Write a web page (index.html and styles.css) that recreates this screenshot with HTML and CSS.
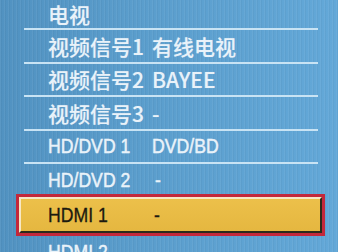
FILE: index.html
```html
<!DOCTYPE html>
<html lang="zh">
<head>
<meta charset="utf-8">
<link rel="stylesheet" href="styles.css">
</head>
<body>
<div class="screen">
  <ul class="menu">
    <li class="row cjk first"><span class="label">电视</span><span class="value"></span></li>
    <li class="row cjk"><span class="label">视频信号1</span><span class="value">有线电视</span></li>
    <li class="row cjk"><span class="label">视频信号2</span><span class="value">BAYEE</span></li>
    <li class="row cjk"><span class="label">视频信号3</span><span class="value">-</span></li>
    <li class="row latin"><span class="label"><span class="nar">HD/DVD 1</span></span><span class="value"><span class="nar">DVD/BD</span></span></li>
    <li class="row latin plain"><span class="label"><span class="nar">HD/DVD 2</span></span><span class="value"><span class="nar dash">-</span></span></li>
    <li class="row latin selected"><div class="bevel"><span class="label"><span class="nar">HDMI 1</span></span><span class="value"><span class="nar dash">-</span></span></div></li>
    <li class="row latin"><span class="label"><span class="nar">HDMI 2</span></span><span class="value"><span class="nar dash">-</span></span></li>
  </ul>
</div>
</body>
</html>
```
FILE: styles.css
```css
html, body {
  margin: 0;
  padding: 0;
}
body {
  width: 338px;
  height: 252px;
  overflow: hidden;
  background: linear-gradient(90deg, #5192c1 0%, #5a9dcc 40%, #63a8d8 100%);
}
.screen {
  width: 338px;
  height: 252px;
  overflow: hidden;
  background: repeating-linear-gradient(90deg, rgba(255,255,255,0.05) 0 1px, rgba(0,0,0,0.03) 1px 2px, transparent 2px 4px);
}
.menu {
  list-style: none;
  margin: 0 0 0 24px;
  padding: 0;
  width: 294px;
}
.row {
  display: flex;
  align-items: center;
  height: 31.5px;
  border-bottom: 2px solid #c8e3f4;
  color: #e9f2f9;
  text-shadow: 0 0 1px rgba(255,255,255,0.35);
}
.row.first {
  height: 28px;
  align-items: flex-end;
}
.row.plain {
  border-bottom-color: transparent;
}
.label {
  width: 104px;
  padding-left: 24px;
  white-space: nowrap;
  flex: none;
}
.value {
  white-space: nowrap;
}
.cjk {
  font-family: "Noto Sans CJK SC", "Noto Sans", sans-serif;
  font-size: 21px;
  font-weight: 500;
  line-height: 28px;
}
.latin {
  font-family: "Liberation Sans", Arial, sans-serif;
  font-size: 21px;
  -webkit-text-stroke: 0.35px currentColor;
}
.nar {
  display: inline-block;
  transform: scaleX(0.84);
  transform-origin: left center;
}
.dash {
  margin-left: 3px;
}
.selected {
  height: auto;
  margin: -3.5px -7px 0 -8px;
  border: 3px solid #c3283b;
  color: #1c1a10;
  text-shadow: none;
}
.bevel {
  display: flex;
  align-items: center;
  width: 100%;
  height: 36px;
  box-sizing: border-box;
  background: linear-gradient(180deg, #ecc04a 0%, #e5b740 100%);
  border-top: 2px solid #f7e7c4;
  border-left: 2px solid #f7e7c4;
  border-right: 2px solid #2b2a1a;
  border-bottom: 2px solid #2b2a1a;
}
.selected .label {
  width: 103px;
  padding-left: 27px;
}
```
